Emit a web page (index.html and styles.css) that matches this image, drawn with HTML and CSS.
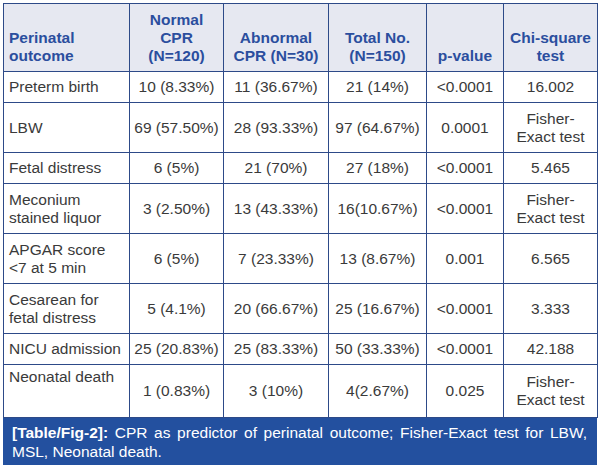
FILE: index.html
```html
<!DOCTYPE html>
<html>
<head>
<meta charset="utf-8">
<link rel="stylesheet" href="styles.css">
</head>
<body>
<div class="wrap">
<table class="data">
<colgroup>
<col class="c1"><col class="c2"><col class="c3"><col class="c4"><col class="c5"><col class="c6">
</colgroup>
<thead>
<tr>
<th class="left">Perinatal<br>outcome</th>
<th>Normal<br>CPR<br>(N=120)</th>
<th>Abnormal<br>CPR (N=30)</th>
<th>Total No.<br>(N=150)</th>
<th>p-value</th>
<th>Chi-square<br>test</th>
</tr>
</thead>
<tbody>
<tr class="one"><td class="left">Preterm birth</td><td>10 (8.33%)</td><td>11 (36.67%)</td><td>21 (14%)</td><td>&lt;0.0001</td><td>16.002</td></tr>
<tr class="two"><td class="left">LBW</td><td>69 (57.50%)</td><td>28 (93.33%)</td><td>97 (64.67%)</td><td>0.0001</td><td>Fisher-<br>Exact test</td></tr>
<tr class="one"><td class="left">Fetal distress</td><td>6 (5%)</td><td>21 (70%)</td><td>27 (18%)</td><td>&lt;0.0001</td><td>5.465</td></tr>
<tr class="two"><td class="left">Meconium<br>stained liquor</td><td>3 (2.50%)</td><td>13 (43.33%)</td><td>16(10.67%)</td><td>&lt;0.0001</td><td>Fisher-<br>Exact test</td></tr>
<tr class="two"><td class="left">APGAR score<br>&lt;7 at 5 min</td><td>6 (5%)</td><td>7 (23.33%)</td><td>13 (8.67%)</td><td>0.001</td><td>6.565</td></tr>
<tr class="two"><td class="left">Cesarean for<br>fetal distress</td><td>5 (4.1%)</td><td>20 (66.67%)</td><td>25 (16.67%)</td><td>&lt;0.0001</td><td>3.333</td></tr>
<tr class="one"><td class="left">NICU admission</td><td>25 (20.83%)</td><td>25 (83.33%)</td><td>50 (33.33%)</td><td>&lt;0.0001</td><td>42.188</td></tr>
<tr class="two"><td class="left top">Neonatal death</td><td>1 (0.83%)</td><td>3 (10%)</td><td>4(2.67%)</td><td>0.025</td><td>Fisher-<br>Exact test</td></tr>
</tbody>
</table>
<div class="caption">
<div class="cap-line1"><b class="cap-label">[Table/Fig-2]:</b> CPR as predictor of perinatal outcome; Fisher-Exact test for LBW,</div>
<div class="cap-line2">MSL, Neonatal death.</div>
</div>
</div>
</body>
</html>
```
FILE: styles.css
```css
html, body {
  margin: 0;
  padding: 0;
  background: #ffffff;
}
.wrap {
  padding: 3px 0 0 3px;
  width: 594px;
  font-family: "Liberation Sans", Arial, sans-serif;
  font-size: 15.5px;
}
.data {
  border-collapse: collapse;
  table-layout: fixed;
  width: 594px;
}
.c1 { width: 126px; }
.c2 { width: 94px; }
.c3 { width: 105px; }
.c4 { width: 98px; }
.c5 { width: 77px; }
.c6 { width: 94px; }
.data th, .data td {
  border: 1px solid #2d4a88;
  line-height: 18px;
  text-align: center;
  padding: 0 4px;
  white-space: nowrap;
  overflow: hidden;
}
.data th {
  background: #e6e8f1;
  color: #2b4e9e;
  font-weight: bold;
  vertical-align: bottom;
  height: 54px;
  padding-top: 7px;
  padding-bottom: 6px;
}
.data td {
  color: #3a3a3a;
  vertical-align: middle;
}
.data .left {
  text-align: left;
  padding-left: 5px;
}
.one td { height: 30px; padding-top: 0; padding-bottom: 0; }
.two td { height: 49px; padding-top: 0; padding-bottom: 0; }
.data tr.two td.top { vertical-align: top; padding-top: 3px; }
.caption {
  background: #23509f;
  color: #ffffff;
  line-height: 19px;
  padding: 5px 10px 4px 9px;
}
.cap-line1 {
  text-align: justify;
  text-align-last: justify;
  white-space: nowrap;
}
.cap-label {
  font-weight: bold;
}
```
